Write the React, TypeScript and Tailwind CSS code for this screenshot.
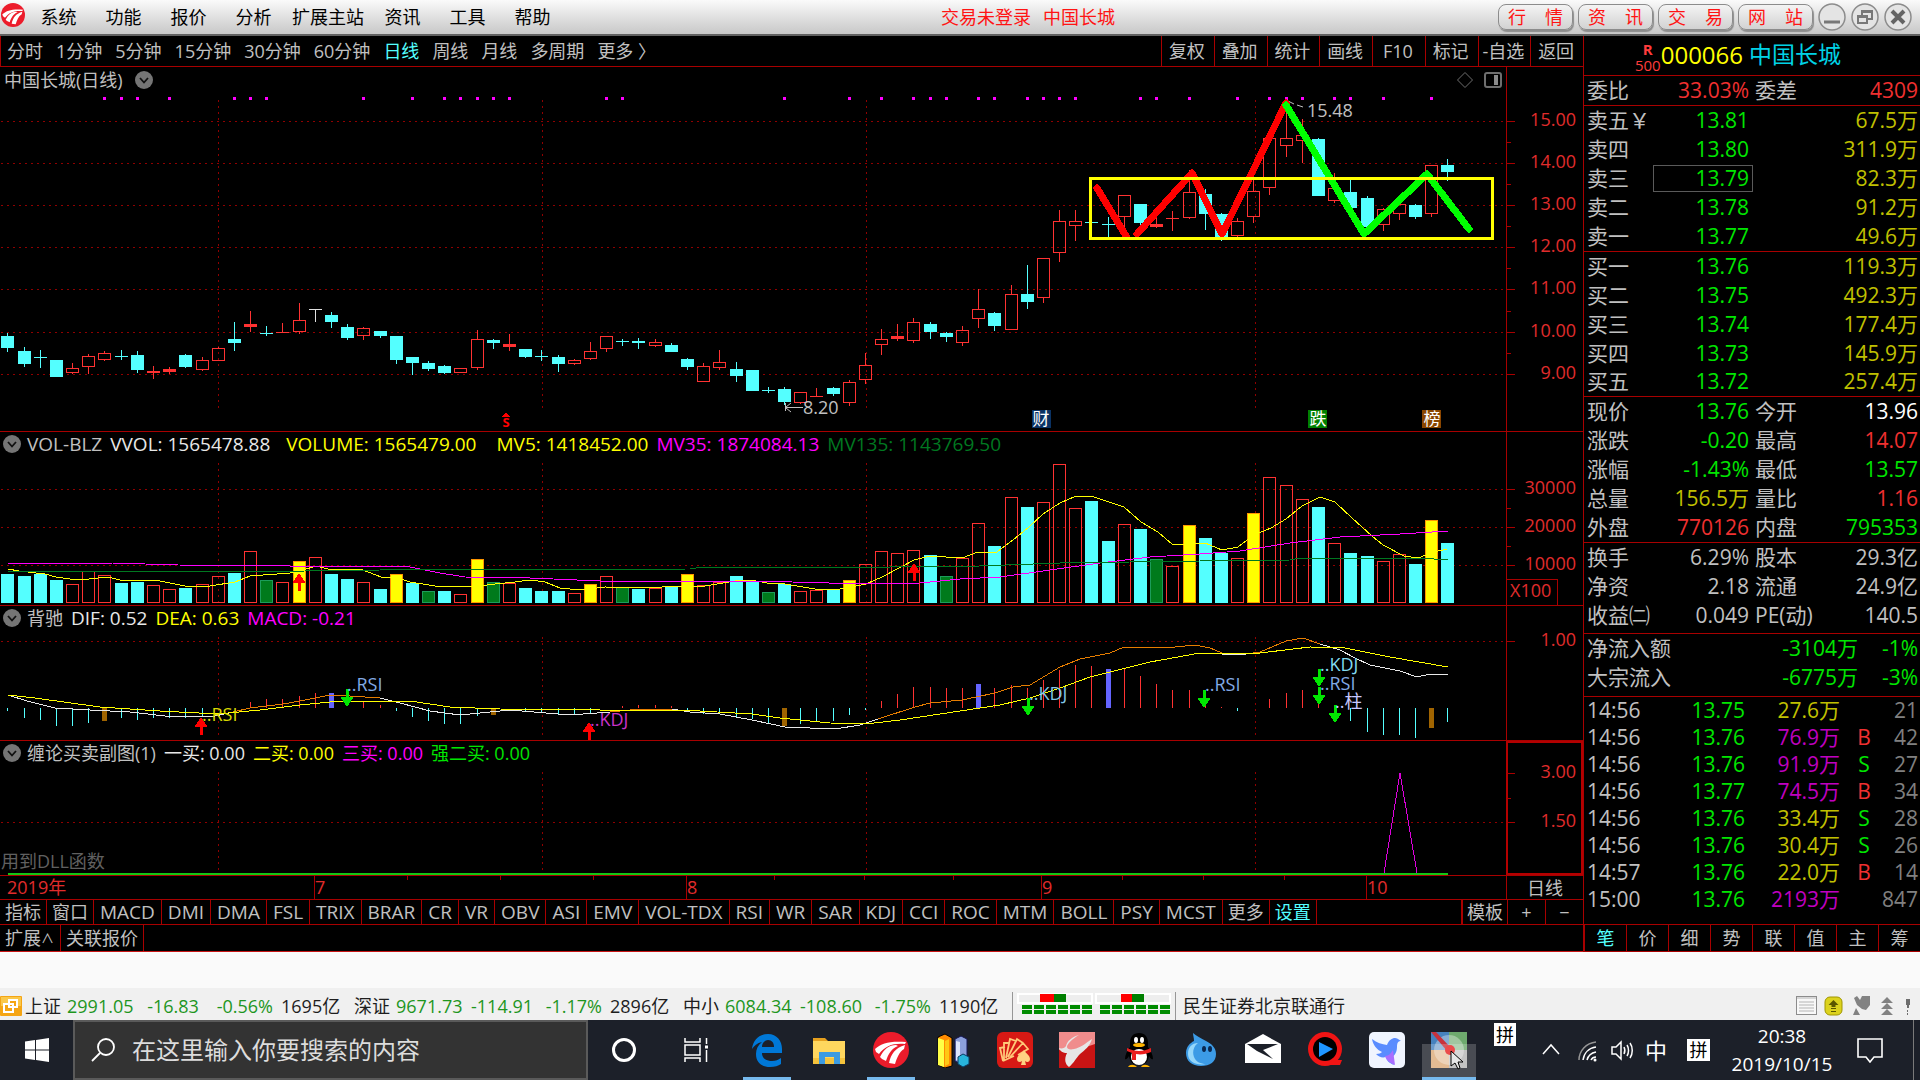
import type { ReactNode } from 'react';
import clsx from 'clsx';

type CandleKind = 'up' | 'flat' | 'down' | 'even';
type Candle = [CandleKind, number, number, number, number];
type BarKind = 'c' | 'r' | 'g' | 'y';

const STEP = 16.18;
const cx = (i: number) => Math.floor(7.9 + i * STEP);

const RED = '#ff3232';
const CYAN = '#54ffff';
const LINE = '#a80000';
const GRID = '#900000';

// kind, wick top, body top, body bottom, wick bottom
const CANDLES: Candle[] = [
  ['down', 333, 336, 348, 352], ['down', 347, 351, 364, 367], ['down', 350, 357, 358, 368],
  ['down', 360, 360, 377, 377], ['up', 363, 368, 373, 374], ['up', 354, 356, 367, 374],
  ['up', 351, 353, 360, 361], ['down', 350, 356, 357, 360], ['down', 351, 355, 370, 373],
  ['flat', 366, 371, 373, 379], ['flat', 367, 369, 372, 374], ['down', 354, 355, 367, 368],
  ['up', 357, 360, 370, 371], ['up', 347, 348, 361, 361], ['down', 322, 339, 343, 351],
  ['flat', 311, 324, 327, 332], ['down', 326, 333, 334, 336], ['flat', 323, 332, 333, 333],
  ['up', 303, 320, 332, 334], ['even', 309, 309, 310, 322], ['down', 312, 315, 322, 328],
  ['down', 324, 327, 338, 340], ['up', 327, 328, 336, 340], ['down', 331, 331, 336, 338],
  ['down', 336, 336, 360, 364], ['down', 357, 357, 363, 375], ['down', 361, 363, 369, 371],
  ['down', 365, 366, 373, 374], ['up', 368, 368, 373, 373], ['up', 330, 339, 368, 370],
  ['down', 339, 340, 343, 349], ['flat', 334, 344, 347, 351], ['down', 349, 349, 357, 358],
  ['down', 350, 356, 357, 361], ['down', 355, 357, 364, 372], ['up', 359, 360, 364, 365],
  ['up', 342, 351, 359, 360], ['up', 336, 336, 349, 352], ['down', 339, 341, 342, 346],
  ['down', 338, 341, 343, 349], ['up', 339, 342, 346, 347], ['down', 343, 345, 352, 352],
  ['down', 358, 359, 367, 370], ['up', 363, 366, 382, 382], ['up', 350, 362, 368, 370],
  ['down', 362, 369, 376, 382], ['down', 370, 370, 391, 391], ['down', 387, 390, 391, 393],
  ['down', 387, 389, 402, 405], ['up', 392, 392, 403, 404], ['flat', 388, 396, 397, 397],
  ['down', 387, 388, 394, 396], ['up', 380, 382, 403, 406], ['up', 353, 365, 380, 384],
  ['up', 329, 339, 345, 355], ['flat', 324, 336, 339, 341], ['up', 318, 322, 341, 343],
  ['down', 322, 324, 332, 339], ['down', 332, 333, 337, 342], ['up', 326, 330, 343, 346],
  ['up', 289, 309, 319, 328], ['down', 312, 313, 326, 331], ['up', 285, 294, 330, 330],
  ['down', 265, 294, 302, 309], ['up', 258, 258, 298, 303], ['up', 210, 221, 253, 262],
  ['up', 210, 221, 226, 241], ['down', 186, 222, 223, 232], ['down', 217, 224, 225, 237],
  ['up', 195, 195, 217, 237], ['down', 204, 204, 223, 226], ['flat', 215, 224, 227, 228],
  ['flat', 211, 218, 219, 231], ['up', 170, 192, 218, 219], ['down', 189, 194, 214, 230],
  ['down', 213, 214, 237, 241], ['up', 218, 221, 236, 239], ['up', 179, 191, 217, 223],
  ['up', 138, 138, 188, 195], ['up', 101, 138, 146, 157], ['up', 119, 135, 141, 163],
  ['down', 138, 139, 196, 196], ['up', 173, 188, 201, 203], ['down', 180, 192, 208, 208],
  ['down', 196, 198, 227, 233], ['up', 208, 209, 225, 231], ['up', 203, 204, 214, 220],
  ['down', 204, 205, 217, 219], ['up', 165, 165, 214, 217], ['down', 159, 165, 172, 181],
];

const SIGNAL_DOTS = [
  6, 7, 8, 10, 14, 15, 16, 22, 25, 27, 28, 29, 30, 31, 37, 38, 48, 52, 54, 56, 57, 58, 60, 61, 63,
  64, 65, 66, 70, 71, 73, 76, 78, 79, 80, 82, 83, 85, 88,
];

const VOL: [BarKind, number][] = [
  ['c', 574], ['c', 576], ['c', 574], ['c', 580], ['r', 584], ['r', 571], ['r', 575], ['c', 583],
  ['c', 582], ['r', 585], ['r', 589], ['c', 588], ['r', 584], ['r', 576], ['c', 573], ['r', 551],
  ['g', 580], ['r', 582], ['y', 561], ['r', 557], ['c', 574], ['c', 579], ['r', 582], ['c', 589],
  ['y', 574], ['c', 583], ['g', 591], ['c', 591], ['r', 594], ['y', 559], ['g', 582], ['r', 583],
  ['c', 588], ['c', 591], ['c', 591], ['r', 593], ['y', 584], ['r', 576], ['g', 587], ['c', 589],
  ['r', 588], ['c', 587], ['y', 574], ['r', 585], ['r', 582], ['c', 576], ['c', 581], ['g', 592],
  ['c', 584], ['r', 591], ['r', 590], ['c', 590], ['y', 580], ['r', 564], ['r', 551], ['r', 553],
  ['r', 550], ['c', 555], ['g', 576], ['r', 558], ['r', 523], ['c', 546], ['r', 497], ['c', 507],
  ['r', 502], ['r', 464], ['r', 508], ['c', 501], ['c', 541], ['r', 524], ['c', 529], ['g', 559],
  ['r', 566], ['y', 525], ['c', 538], ['c', 553], ['r', 558], ['y', 513], ['r', 477], ['r', 485],
  ['r', 499], ['c', 507], ['r', 543], ['c', 553], ['c', 556], ['r', 561], ['r', 554], ['c', 564],
  ['y', 520], ['c', 543],
];

const MV5 =
  '8,569 19,571 45,574 56,577 70,579 89,579 108,577 120,580 155,580 185,586 210,586 235,582 250,576 290,573 300,571 316,566 328,569 363,570 381,577 396,577 410,582 435,586 460,587 480,586 495,584 515,582 530,580 545,582 560,588 580,590 605,587 640,588 685,586 705,586 735,581 751,580 767,583 785,584 815,589 835,590 866,584 882,577 901,567 914,560 930,556 962,558 978,552 997,552 1013,540 1029,527 1043,514 1060,503 1076,496 1094,497 1124,507 1141,522 1158,532 1173,545 1205,543 1222,550 1238,547 1254,535 1271,528 1286,519 1302,506 1320,497 1335,502 1352,518 1372,536 1383,545 1404,556 1418,558 1434,552 1447,549';
const MV35 =
  '8,563 112,563 178,565 290,566 405,566 420,569 440,573 465,577 530,578 600,581 690,581 740,581 792,582 866,584 920,583 960,579 1000,577 1043,571 1100,563 1150,557 1200,554 1240,551 1290,543 1340,537 1400,534 1448,531';
const MV135 =
  '8,571 230,572 380,570 690,569 696,568 890,567 980,566 1060,563 1200,561 1290,560 1300,558 1420,558 1448,560';

// bar ends around the zero line at 708
const MACD: (number | null)[] = [
  711, 718, 720, 726, 726, 723, 721, 718, 720, 718, 718, 718, 716, null, null, 702, 699, 699, 696,
  693, 693, null, 702, 705, 711, 717, 721, 724, 724, 716, 715, null, 711, 712, 714, 714, 713, null,
  706, 705, 705, 706, 711, 714, 714, 717, 719, 723, 726, 724, 722, 721, 715, 710, 701, 694, 687, 687,
  688, 688, 684, 688, 685, 688, 680, 670, 665, 666, 669, 669, 676, 684, 690, 690, 706, 707, 711, null,
  699, 693, 690, 703, null, 721, 732, 735, 735, 738, 728, 722,
];
const MACD_WIDE: Record<number, string> = {
  6: '#a06400', 30: '#a06400', 48: '#a06400', 88: '#a06400', 20: '#6464ff', 60: '#6464ff', 68: '#6464ff',
};

const DEA =
  '8,695 35,698 100,707 160,711 218,714 260,710 300,705 340,701 410,701 450,707 500,709 700,711 752,714 780,718 830,723 866,724 900,720 1000,705 1030,698 1060,688 1090,677 1150,662 1200,653 1260,653 1310,647 1345,648 1390,657 1448,667';
const DIF_BELOW = [
  '8,695 27,701 55,708 90,710 130,712 165,716 215,716 233,712',
  '380,698 400,703 430,711 460,715 480,713 510,710 570,715 610,712',
  '672,709 690,712 720,714 752,720 785,727 835,729 860,725 878,719',
  '1222,654 1246,654',
  '1320,644 1340,650 1355,658 1370,665 1400,671 1417,677 1430,674 1448,674',
];
const DIF_ABOVE = [
  '233,712 250,708 283,704 300,701 330,695 350,696 380,698',
  '610,712 640,709 672,709',
  '878,719 915,707 930,703 962,700 995,693 1013,687 1030,685 1060,667 1080,659 1110,653 1124,647 1175,647 1195,645 1210,648 1222,653',
  '1246,654 1260,652 1286,641 1303,638 1320,644',
];

const MENUS = ['系统', '功能', '报价', '分析', '扩展主站', '资讯', '工具', '帮助'];
const PERIODS = ['分时', '1分钟', '5分钟', '15分钟', '30分钟', '60分钟', '日线', '周线', '月线', '多周期', '更多 〉'];
const TOOLS = ['复权', '叠加', '统计', '画线', 'F10', '标记', '-自选', '返回'];
const INDICATORS = [
  '指标', '窗口', 'MACD', 'DMI', 'DMA', 'FSL', 'TRIX', 'BRAR', 'CR', 'VR', 'OBV', 'ASI', 'EMV',
  'VOL-TDX', 'RSI', 'WR', 'SAR', 'KDJ', 'CCI', 'ROC', 'MTM', 'BOLL', 'PSY', 'MCST', '更多', '设置',
];

const ASKS = [
  ['卖五￥', '13.81', '67.5万'], ['卖四', '13.80', '311.9万'], ['卖三', '13.79', '82.3万'],
  ['卖二', '13.78', '91.2万'], ['卖一', '13.77', '49.6万'],
];
const BIDS = [
  ['买一', '13.76', '119.3万'], ['买二', '13.75', '492.3万'], ['买三', '13.74', '177.4万'],
  ['买四', '13.73', '145.9万'], ['买五', '13.72', '257.4万'],
];

const UP = 'text-[#f03030]';
const DN = 'text-[#00e600]';
const AMT = 'text-[#c0c000]';
const BIG = 'text-[#c000c0]';
const DIM = 'text-[#c0c0c0]';

const QUOTE = [
  ['现价', '13.76', DN, '今开', '13.96', 'text-white'],
  ['涨跌', '-0.20', DN, '最高', '14.07', UP],
  ['涨幅', '-1.43%', DN, '最低', '13.57', DN],
  ['总量', '156.5万', AMT, '量比', '1.16', UP],
  ['外盘', '770126', UP, '内盘', '795353', DN],
];
const FUNDAMENTALS = [
  ['换手', '6.29%', DIM, '股本', '29.3亿', DIM],
  ['净资', '2.18', DIM, '流通', '24.9亿', DIM],
  ['收益㈡', '0.049', DIM, 'PE(动)', '140.5', DIM],
];
const TICKS = [
  ['14:56', '13.75', '27.6万', '', '21', AMT], ['14:56', '13.76', '76.9万', 'B', '42', BIG],
  ['14:56', '13.76', '91.9万', 'S', '27', BIG], ['14:56', '13.77', '74.5万', 'B', '34', BIG],
  ['14:56', '13.76', '33.4万', 'S', '28', AMT], ['14:56', '13.76', '30.4万', 'S', '26', AMT],
  ['14:57', '13.76', '22.0万', 'B', '14', AMT], ['15:00', '13.76', '2193万', '', '847', BIG],
];
const SIDE_TABS = ['笔', '价', '细', '势', '联', '值', '主', '筹'];
const INDEXES = [
  ['上证', '2991.05', '-16.83', '-0.56%', '1695亿'],
  ['深证', '9671.73', '-114.91', '-1.17%', '2896亿'],
  ['中小', '6084.34', '-108.60', '-1.75%', '1190亿'],
];

function BrandMark({ className }: { className?: string }) {
  return (
    <svg viewBox="0 0 36 36" className={className} aria-hidden="true">
      <circle cx="18" cy="18" r="18" fill="#ec1c2b" />
      <path d="M2 17C9 11 16 9 33 10L32 12C20 11 12 14 6 22L3 20Z" fill="#fff" />
      <path d="M7 25C11 17 16 13 23 13L25 14C19 16 15 22 13 29L9 27Z" fill="#fff" />
      <path d="M16 31C18 22 22 16 32 13L31 17C26 20 24 26 22 32Z" fill="#fff" />
    </svg>
  );
}

function Grid({ rows, top, bottom }: { rows: number[]; top: number; bottom: number }) {
  return (
    <g stroke={GRID} strokeWidth="2" strokeDasharray="2 4">
      {rows.map((y) => (
        <line key={y} x1="1" x2="1506" y1={y} y2={y} strokeWidth="1" />
      ))}
      {[218, 542, 866, 1255].map((x) => (
        <line key={x} x1={x} x2={x} y1={top} y2={bottom} strokeWidth="1" />
      ))}
    </g>
  );
}

function Arrow({ x, y, down }: { x: number; y: number; down?: boolean }) {
  return down ? (
    <path d={`M${x - 1.5} ${y}h3v8h5l-6.500 10l-6.500 -10h5z`} fill="#00e600" />
  ) : (
    <path d={`M${x - 1.5} ${y + 18}h3v-8h5l-6.500 -10l-6.500 10h5z`} fill="#ff0000" />
  );
}

interface PanelProps {
  header: ReactNode;
  headerClass?: string;
  top: number;
  height: string;
  size: number;
  children: ReactNode;
  ticks: [number, string][];
  minor?: number[];
  active?: boolean;
  unit?: string;
}

function Panel({ header, headerClass, top, height, size, children, ticks, minor = [], active, unit }: PanelProps) {
  return (
    <section className="flex border-b border-[#a80000]">
      <div className="min-w-0 flex-1">
        <div
          className={clsx('flex h-[26px] items-center gap-2 whitespace-nowrap pl-[3px] leading-none', headerClass)}
        >
          {header}
        </div>
        <svg
          viewBox={`0 ${top + 26} 1506 ${size - 26}`}
          preserveAspectRatio="none"
          className={clsx('block w-full', height)}
          shapeRendering="crispEdges"
          fontSize="18"
        >
          {children}
        </svg>
      </div>
      <svg viewBox={`0 ${top} 77 ${size}`} className="w-[77px] shrink-0" shapeRendering="crispEdges" fontSize="18">
        {active ? (
          <rect x="1" y={top + 1} width="75" height={size - 2} fill="none" stroke="#b40000" strokeWidth="2" />
        ) : (
          <rect y={top} width="1" height={size} fill={LINE} />
        )}
        {ticks.map(([y, label]) => (
          <g key={label}>
            <rect x="1" y={y} width="8" height="1" fill={LINE} />
            <text x="70" y={y + 5} textAnchor="end" fill="#e02c2c">
              {label}
            </text>
          </g>
        ))}
        {minor.map((y) => (
          <rect key={y} x="1" y={y} width="4" height="1" fill={LINE} />
        ))}
        {unit ? (
          <>
            <path d="M0 579.500H51.500V605" fill="none" stroke={LINE} />
            <text x="4" y="597" fill="#e02c2c">
              {unit}
            </text>
          </>
        ) : null}
      </svg>
    </section>
  );
}

function Collapse({ label }: { label: string }) {
  return (
    <button type="button" aria-label={label} className="shrink-0">
      <svg viewBox="0 0 18 18" className="h-[18px] w-[18px]">
        <circle cx="9" cy="9" r="9" fill="#757575" />
        <path d="M5 7l4 4.500L13 7" fill="none" stroke="#111" strokeWidth="1.800" />
      </svg>
    </button>
  );
}

function CandlePanel() {
  return (
    <Panel
      top={67}
      size={364}
      height="h-[338px]"
      ticks={[
        [121, '15.00'], [163, '14.00'], [205, '13.00'], [247, '12.00'], [289, '11.00'], [332, '10.00'], [374, '9.00'],
      ]}
      minor={[142, 184, 226, 268, 311, 353]}
      header={
        <>
          <span className="mr-1 pl-px text-[#c0c0c0]">中国长城(日线)</span>
          <Collapse label="展开" />
          <svg viewBox="0 0 46 18" className="ml-auto mr-1 h-[18px] w-[46px]" fill="none" stroke="#6e6e6e">
            <path d="M9 1.500L16.500 9L9 16.500L1.500 9Z" />
            <rect x="29" y="2" width="16" height="14" rx="2" strokeWidth="2" />
            <rect x="38" y="4" width="4" height="10" fill="#8a8a8a" stroke="none" />
          </svg>
        </>
      }
    >
      <Grid rows={[121, 163, 205, 247, 289, 332, 374]} top={100} bottom={408} />
      {SIGNAL_DOTS.map((i) => (
        <rect key={i} x={cx(i) - 1} y="97" width="3" height="3" fill="#ff00ff" />
      ))}
      {CANDLES.map(([kind, high, top, bottom, low], i) => {
        const x = cx(i);
        const color = kind === 'down' ? CYAN : kind === 'even' ? '#e0e0e0' : RED;
        return (
          <g key={i} fill={color}>
            {kind === 'up' ? (
              <>
                <rect x={x} y={high} width="1" height={top - high} />
                <rect x={x} y={bottom} width="1" height={low - bottom} />
                <rect x={x - 5.5} y={top + 0.5} width="12" height={bottom - top - 1} fill="none" stroke={color} />
              </>
            ) : (
              <>
                <rect x={x} y={high} width="1" height={low - high} />
                <rect x={x - 6} y={top} width="13" height={Math.max(bottom - top, 1)} />
              </>
            )}
          </g>
        );
      })}
      <g fill="#c0c0c0" shapeRendering="auto">
        <path d="M786 407.500H803M785.500 403V411M786 407l5-4M786 408l5 4" fill="none" stroke="#c0c0c0" />
        <text x="803" y="414">8.20</text>
        <path d="M1288 101l6 3M1297 105l6 2" stroke="#c0c0c0" />
        <text x="1307" y="117">15.48</text>
      </g>
      <g fill="none" strokeLinecap="round" strokeLinejoin="round" strokeWidth="7">
        <path d="M1097 188L1126 236M1137 234L1192 173L1222 234L1286 103" stroke="#ff0000" />
        <path d="M1286 105L1364 234L1427 174L1469 229" stroke="#00ff00" />
        <rect x="1090.500" y="178.500" width="402" height="60" stroke="#ffff00" strokeWidth="3" strokeLinejoin="miter" />
      </g>
      <g textAnchor="middle" fill="#fff" fontSize="17">
        <path d="M506 412l4 5h-8z" fill="#ff0000" />
        <text x="506" y="427" fill="#ff0000" fontSize="13" fontWeight="700">S</text>
        <rect x="1032" y="410" width="19" height="18" fill="#0a3264" />
        <text x="1041" y="425">财</text>
        <rect x="1308" y="410" width="19" height="18" fill="#008000" />
        <text x="1318" y="425">跌</text>
        <rect x="1422" y="410" width="19" height="18" fill="#8a4600" />
        <text x="1432" y="425">榜</text>
      </g>
    </Panel>
  );
}

function VolumePanel() {
  return (
    <Panel
      top={432}
      size={173}
      height="h-[147px]"
      headerClass="pb-0.5 text-[19px]"
      ticks={[[489, '30000'], [527, '20000'], [565, '10000']]}
      minor={[508, 546]}
      unit="X100"
      header={
        <>
          <Collapse label="VOL-BLZ" />
          <span className="-ml-0.5 text-[#c0c0c0]">VOL-BLZ</span>
          <span className="text-[#e8e8e8]">VVOL: 1565478.88</span>
          <span className="ml-2 text-[#ffff00]">VOLUME: 1565479.00</span>
          <span className="ml-3 text-[#ffff00]">MV5: 1418452.00</span>
          <span className="text-[#ff00ff]">MV35: 1874084.13</span>
          <span className="text-[#007820]">MV135: 1143769.50</span>
        </>
      }
    >
      <Grid rows={[489, 527, 565]} top={463} bottom={603} />
      {VOL.map(([kind, y], i) => {
        const x = cx(i) - 6;
        const h = 603 - y;
        if (kind === 'r') {
          return <rect key={i} x={x + 0.5} y={y + 0.5} width="12" height={h - 1} fill="none" stroke={RED} />;
        }
        if (kind === 'y') {
          return <rect key={i} x={x + 0.5} y={y + 0.5} width="12" height={h - 1} fill="#ffff00" stroke="#ff9600" />;
        }
        if (kind === 'g') {
          return <rect key={i} x={x + 0.5} y={y + 0.5} width="12" height={h - 1} fill="#007a1c" stroke="#1c9c5a" />;
        }
        return <rect key={i} x={x} y={y} width="13" height={h} fill={CYAN} />;
      })}
      <g fill="none">
        <polyline points={MV5} stroke="#ffff00" />
        <polyline points={MV35} stroke="#ff00ff" />
        <polyline points={MV135} stroke="#007820" />
      </g>
      <Arrow x={299} y={573} />
      <Arrow x={914} y={563} />
    </Panel>
  );
}

function MacdPanel() {
  return (
    <Panel
      top={606}
      size={134}
      height="h-[108px]"
      headerClass="pb-0.5"
      ticks={[[641, '1.00']]}
      header={
        <>
          <Collapse label="背驰" />
          <span className="-ml-0.5 text-[#c0c0c0]">背驰</span>
          <span className="text-[19px] text-[#e8e8e8]">DIF: 0.52</span>
          <span className="text-[19px] text-[#ffff00]">DEA: 0.63</span>
          <span className="text-[19px] text-[#ff00ff]">MACD: -0.21</span>
        </>
      }
    >
      <Grid rows={[641]} top={637} bottom={736} />
      {MACD.map((end, i) => {
        if (end === null) return null;
        const wide = MACD_WIDE[i];
        return (
          <rect
            key={i}
            x={wide ? cx(i) - 2 : cx(i)}
            y={Math.min(end, 708)}
            width={wide ? 5 : 1}
            height={Math.max(Math.abs(end - 708), 1)}
            fill={wide ?? (end > 708 ? CYAN : RED)}
          />
        );
      })}
      <g fill="none" strokeWidth="1">
        {DIF_BELOW.map((p) => (
          <polyline key={p} points={p} stroke="#e8e8e8" />
        ))}
        {DIF_ABOVE.map((p) => (
          <polyline key={p} points={p} stroke="#e67d00" />
        ))}
        <polyline points={DEA} stroke="#ffff00" />
      </g>
      <Arrow x={201} y={717} />
      <Arrow x={589} y={722} />
      <Arrow x={347} y={689} down />
      <Arrow x={1028} y={698} down />
      <Arrow x={1204} y={690} down />
      <Arrow x={1319} y={669} down />
      <Arrow x={1319} y={687} down />
      <Arrow x={1335} y={705} down />
      <text x="202" y="721" fill="#d8d800">..RSI</text>
      <text x="590" y="726" fill="#c832c8">..KDJ</text>
      <text x="347" y="691" fill="#82aae6">..RSI</text>
      <text x="1029" y="700" fill="#82c8e6">..KDJ</text>
      <text x="1205" y="691" fill="#82aae6">..RSI</text>
      <text x="1320" y="671" fill="#82dcf0">..KDJ</text>
      <text x="1320" y="690" fill="#82aae6">..RSI</text>
      <text x="1335" y="708" fill="#c8c8ff">..柱</text>
    </Panel>
  );
}

function ChanPanel() {
  return (
    <Panel
      top={741}
      size={134}
      height="h-[108px]"
      headerClass="pb-0.5"
      ticks={[[773, '3.00'], [822, '1.50']]}
      minor={[798]}
      active
      header={
        <>
          <Collapse label="缠论买卖副图" />
          <span className="-ml-0.5 text-[#c0c0c0]">缠论买卖副图(1)</span>
          <span className="text-[#e8e8e8]">一买: 0.00</span>
          <span className="text-[#ffff00]">二买: 0.00</span>
          <span className="text-[#ff00ff]">三买: 0.00</span>
          <span className="text-[#00e600]">强二买: 0.00</span>
        </>
      }
    >
      <Grid rows={[822]} top={772} bottom={871} />
      <path d="M1384 873L1400 773L1417 873" fill="none" stroke="#dc00dc" />
      <line x1="8" x2="1448" y1="874" y2="874" stroke="#14c814" strokeWidth="2" />
      <text x="1" y="868" fill="#606060">用到DLL函数</text>
    </Panel>
  );
}

function DateAxis() {
  return (
    <div className="flex h-6 border-b border-[#a80000] leading-none text-[#e02c2c]">
      <svg viewBox="0 0 1506 23" preserveAspectRatio="none" className="h-[23px] min-w-0 flex-1" fontSize="18" shapeRendering="crispEdges">
        <path
          d="M314.500 0V23M686.500 0V23M1041.500 0V23M1366.500 0V23M407.500 0V4M500.500 0V4M593.500 0V4M774.500 0V4M864.500 0V4M953.500 0V4M1122.500 0V4M1203.500 0V4M1284.500 0V4"
          stroke={LINE}
        />
        <g fill="#e02c2c">
          <text x="7" y="18">2019年</text>
          <text x="315" y="18">7</text>
          <text x="687" y="18">8</text>
          <text x="1042" y="18">9</text>
          <text x="1367" y="18">10</text>
        </g>
      </svg>
      <div className="flex w-[77px] items-center justify-center border-l border-[#a80000] text-[#c0c0c0]">日线</div>
    </div>
  );
}

function IndicatorTabs() {
  return (
    <>
      <div className="flex h-[25px] border-b border-[#a80000] leading-none">
        {INDICATORS.map((name) => (
          <button
            key={name}
            type="button"
            className={clsx(
              'flex items-center whitespace-nowrap border-r border-[#a80000]',
              /[A-Z]/.test(name) ? 'px-1.5 text-[19px]' : 'px-[5px]',
              name === '设置' ? 'text-[#54ffff]' : 'text-[#c0c0c0]',
            )}
          >
            {name}
          </button>
        ))}
        <div className="ml-auto flex text-[#c0c0c0]">
          <button type="button" className="border-l-2 border-[#a80000] px-1">模板</button>
          <button type="button" aria-label="放大" className="w-[38px] border-l border-[#a80000]">+</button>
          <button type="button" aria-label="缩小" className="w-[38px] border-l border-[#a80000]">−</button>
        </div>
      </div>
      <div className="flex h-[27px] border-b border-[#c81414] leading-none text-[#c0c0c0]">
        <button type="button" className="flex w-[61px] items-center border-r border-[#a80000] pl-[5px]">
          扩展<span className="text-[13px]">∧</span>
        </button>
        <button type="button" className="border-r border-[#a80000] px-[5px]">关联报价</button>
      </div>
    </>
  );
}

function BookTable({ rows, label }: { rows: string[][]; label: string }) {
  return (
    <table aria-label={label} className="w-full table-fixed border-b border-[#a80000]">
      <tbody>
        {rows.map(([side, price, amount]) => (
          <tr key={side} className="h-[29px]">
            <th scope="row" className="w-[69px] whitespace-nowrap p-0 pl-[3px] text-left font-normal text-[#c0c0c0]">
              {side}
            </th>
            <td className="w-[100px] p-0">
              <div
                className={clsx(
                  'flex h-[27px] items-center justify-end border pr-[3px] text-[#00e600]',
                  side === '卖三' ? 'border-[#5a5a5a]' : 'border-transparent',
                )}
              >
                {price}
              </div>
            </td>
            <td className="p-0 pr-0.5 text-right text-[#c0c000]">{amount}</td>
          </tr>
        ))}
      </tbody>
    </table>
  );
}

function PairRows({ rows, className }: { rows: string[][]; className?: string }) {
  return (
    <dl className={clsx('border-b border-[#a80000]', className)}>
      {rows.map(([a, av, ac, b, bv, bc]) => (
        <div key={a} className="flex h-[29px] items-center whitespace-nowrap pl-[3px] pr-0.5">
          <dt className="w-[66px] text-[#c0c0c0]">{a}</dt>
          <dd className={clsx('w-24 text-right', ac)}>{av}</dd>
          <dt className="ml-1.5 text-[#c0c0c0]">{b}</dt>
          <dd className={clsx('ml-auto text-right', bc)}>{bv}</dd>
        </div>
      ))}
    </dl>
  );
}

function QuoteSidebar() {
  return (
    <aside className="flex w-[337px] shrink-0 flex-col border-l border-[#a80000] text-[21px] leading-none">
      <div className="flex h-10 items-center justify-center border-b border-[#a80000] pb-0.5 pr-7">
        <span className="mt-1 flex flex-col items-center text-[15px] leading-4 text-[#ff3c3c]">
          <b>R</b>
          <span>500</span>
        </span>
        <span className="text-2xl text-[#ffff00]">000066</span>
        <span className="ml-1.5 text-[23px] text-[#00d2e6]">中国长城</span>
      </div>
      <PairRows rows={[['委比', '33.03%', UP, '委差', '4309', UP]]} />
      <BookTable rows={ASKS} label="卖盘" />
      <BookTable rows={BIDS} label="买盘" />
      <PairRows rows={QUOTE} />
      <PairRows rows={FUNDAMENTALS} className="pb-[3px]" />
      <dl className="border-b border-[#a80000] pb-1">
        {[['净流入额', '-3104万', '-1%'], ['大宗流入', '-6775万', '-3%']].map(([name, amount, pct]) => (
          <div key={name} className="flex h-[29px] items-center pl-[3px] pr-0.5 text-[#00e600]">
            <dt className="text-[#c0c0c0]">{name}</dt>
            <dd className="ml-auto">{amount}</dd>
            <dd className="w-[60px] text-right">{pct}</dd>
          </div>
        ))}
      </dl>
      <div className="flex-1">
        <table aria-label="分时成交" className="w-full table-fixed">
          <tbody>
            {TICKS.map(([time, price, amount, side, count, tone], i) => (
              <tr key={i} className="h-[27px] text-right">
                <td className="w-[69px] p-0 pl-[3px] text-left text-[#c0c0c0]">{time}</td>
                <td className="w-[92px] p-0 text-[#00e600]">{price}</td>
                <td className={clsx('w-[95px] p-0', tone)}>{amount}</td>
                <td className={clsx('w-[48px] p-0 text-center', side === 'B' ? UP : DN)}>{side}</td>
                <td className="whitespace-nowrap p-0 pr-0.5 text-[#808080]">
                  <div className="flex justify-end">{count}</div>
                </td>
              </tr>
            ))}
          </tbody>
        </table>
      </div>
      <div className="grid h-7 grid-cols-8 border-y border-[#a80000] text-lg leading-none">
        {SIDE_TABS.map((tab, i) => (
          <button
            key={tab}
            type="button"
            className={clsx('border-l border-[#a80000]', i === 0 ? 'text-[#54ffff]' : 'text-[#c0c0c0]')}
          >
            {tab}
          </button>
        ))}
      </div>
    </aside>
  );
}

function TitleBar() {
  return (
    <header className="flex h-9 items-center border-b-2 border-[#606060] bg-linear-to-b from-[#fafafa] to-[#c8c8c8] leading-none text-black">
      <BrandMark className="mb-1 h-6 w-[26px]" />
      <nav className="flex">
        {MENUS.map((m) => (
          <button key={m} type="button" className={m.length > 2 ? 'w-[84px]' : 'w-[65px]'}>
            {m}
          </button>
        ))}
      </nav>
      <p className="flex flex-1 gap-3 pl-[376px] text-[#ff1414]">
        <span>交易未登录</span>
        <span>中国长城</span>
      </p>
      <div className="flex items-center gap-[5px] pr-2">
        {['行 情', '资 讯', '交 易', '网 站'].map((b) => {
          const [first, second] = b.split(' ');
          return (
            <button
              key={b}
              type="button"
              className="flex h-[26px] w-[75px] items-center justify-between rounded-lg border border-[#8c8c8c] bg-linear-to-b from-[#f4f4f4] to-[#d2d2d2] px-[9px] text-[#ff1414] shadow-[1px_2px_1px_#8c8c8c]"
            >
              <span>{first}</span>
              <span>{second}</span>
            </button>
          );
        })}
        {['最小化', '还原', '关闭'].map((name, i) => (
          <button key={name} type="button" aria-label={name}>
            <svg viewBox="0 0 28 28" className="h-7 w-7" fill="none" stroke="#787878">
              <circle cx="14" cy="14" r="13" fill="#e4e4e4" stroke="#8c8c8c" strokeWidth="1.500" />
              {i === 0 ? <path d="M6 19H22" strokeWidth="3" /> : null}
              {i === 1 ? (
                <path d="M11 12V8H21V16H17M11 9H21M7 13H16V20H7ZM7 14H16" strokeWidth="2" />
              ) : null}
              {i === 2 ? <path d="M8 8L20 20M20 8L8 20" stroke="#646464" strokeWidth="4" /> : null}
            </svg>
          </button>
        ))}
      </div>
    </header>
  );
}

function PeriodBar() {
  return (
    <div className="flex h-[31px] border-b border-l border-[#a80000] leading-none text-[#c0c0c0]">
      <nav className="flex flex-1 items-center gap-[13px] pl-1.5">
        {PERIODS.map((p) => (
          <button key={p} type="button" className={clsx('whitespace-nowrap', p === '日线' && 'text-[#54ffff]')}>
            {p}
          </button>
        ))}
      </nav>
      <div className="grid w-[422px] grid-cols-8">
        {TOOLS.map((t) => (
          <button key={t} type="button" className="whitespace-nowrap border-l border-[#a80000] pr-0.5">
            {t}
          </button>
        ))}
      </div>
    </div>
  );
}

function BreadthMeter({ red, green }: { red: number; green: number }) {
  return (
    <svg viewBox="0 0 76 22" className="h-[22px] w-[76px]" shapeRendering="crispEdges" aria-hidden="true">
      <rect x="1" y="1" width="74" height="9" fill="#eee" stroke="#fff" strokeWidth="2" />
      <rect x={red} y="1" width={green - red} height="8" fill="#ff0000" />
      <rect x={green} y="1" width="12" height="8" fill="#008000" />
      {[5, 17, 29, 41, 53, 65].map((x) => (
        <g key={x} fill="#008c00">
          <rect x={x} y="12" width="10" height="4" />
          <rect x={x} y="17" width="10" height="4" />
        </g>
      ))}
    </svg>
  );
}

function StatusBar() {
  return (
    <footer className="flex h-8 items-center bg-[#f0f0f0] pt-1 leading-none text-[#1e1e1e]">
      <svg viewBox="0 0 22 20" className="mr-[3px] h-5 w-[22px]" aria-hidden="true">
        <rect width="22" height="20" rx="1" fill="#f5a514" />
        <rect x="1" y="1" width="20" height="9" fill="#fac84b" />
        <path d="M9 4h8v7h-8zM4 8h9v8H4z" fill="#f5a514" stroke="#fff" strokeWidth="2" />
      </svg>
      {INDEXES.map(([name, price, diff, pct, amount]) => (
        <div key={name} className="flex w-[329px] text-[#1e961e]">
          <span className="w-[42px] text-[#1e1e1e]">{name}</span>
          <span className="w-[74px]">{price}</span>
          <span className="w-16 text-center">{diff}</span>
          <span className="w-[68px] text-right">{pct}</span>
          <span className="ml-2 text-[#1e1e1e]">{amount}</span>
        </div>
      ))}
      <div className="flex h-full items-center gap-0.5 border-x border-[#969696] px-1 pb-1">
        <BreadthMeter red={23} green={37} />
        <BreadthMeter red={26} green={37} />
      </div>
      <span className="ml-[7px]">民生证券北京联通行</span>
      <svg viewBox="0 0 120 24" className="ml-auto mr-1 h-6 w-[120px]" aria-hidden="true">
        <rect x="0.500" y="2.500" width="20" height="18" fill="#f8f8f8" stroke="#8c8c8c" />
        <path d="M1 4h19M3 8h15M3 11h15M3 14h15M3 17h15" stroke="#b4b4b4" />
        <rect x="29" y="3" width="17" height="18" rx="5" fill="#dcd21e" stroke="#a09600" />
        <path d="M37.500 6l5 5h-3v2h-4v-2h-3zM35 14h5v1h-5zM35 17h5v1h-5z" fill="#5a5500" />
        <path d="M58 4l3-2l3 4l2-4h8v9l-4 5l-4-1l-5-4zM57 21l3-7l4 7z" fill="#828282" />
        <path d="M91 3l6 6h-12zM91 9l6 6h-12zM91 15l6 6h-12z" fill="#828282" />
        <path d="M110 5h4v6h-1v3h-2v-3h-1zM111 16h1v2h-1zM111 19h1v2h-1z" fill="#6e6e6e" />
      </svg>
    </footer>
  );
}

const APPS: { name: string; running?: boolean; icon: ReactNode }[] = [
  {
    name: 'Edge',
    running: true,
    icon: (
      <path
        d="M3 17C4 8 10 2 19 2C28 2 33 9 33 17V21H13C13 27 18 29 23 29C27 29 29 28 32 26V32C29 34 26 35 21 35C12 35 7 30 7 22C7 17 9 13 13 10C8 11 5 14 3 17ZM13 15H25C25 11 23 8 19 8C16 8 13 11 13 15Z"
        fill="#0078d7"
      />
    ),
  },
  {
    name: '文件资源管理器',
    icon: (
      <>
        <path d="M2 6h12l3 3v3H2z" fill="#e6a01e" />
        <rect x="2" y="9" width="32" height="23" fill="#ffd75e" />
        <path d="M2 26h32v6H2z" fill="#f5c33c" />
        <path d="M8 32V20h21v12h-6v-7h-9v7z" fill="#3c9be1" />
      </>
    ),
  },
  {
    name: '通达信',
    running: true,
    icon: (
      <>
        <circle cx="18" cy="18" r="18" fill="#ec1c2b" />
        <path d="M2 17C9 11 16 9 33 10L32 12C20 11 12 14 6 22L3 20Z" fill="#fff" />
        <path d="M7 25C11 17 16 13 23 13L25 14C19 16 15 22 13 29L9 27Z" fill="#fff" />
        <path d="M16 31C18 22 22 16 32 13L31 17C26 20 24 26 22 32Z" fill="#fff" />
      </>
    ),
  },
  {
    name: '行情',
    icon: (
      <>
        <path d="M3 5l7-3l7 4v28l-7 2l-7-3z" fill="#ff8c00" stroke="#000" />
        <path d="M3 6l6 2v27l-6-2z" fill="#ffff46" />
        <path d="M10 9l4-2v25l-4 2z" fill="#ffc814" />
        <path d="M20 7l6-3l6 3v22l-6 3l-6-3z" fill="#8ca0dc" stroke="#141450" />
        <path d="M21 9l4 1v19l-4-1z" fill="#dce6ff" />
        <path d="M23 25l5-3l6 3v7l-6 3l-5-3z" fill="#28b4dc" stroke="#0a3c64" />
      </>
    ),
  },
  {
    name: '纸牌',
    icon: (
      <>
        <rect width="36" height="36" rx="6" fill="#d71914" />
        <path d="M6 29L3 16L8 15M7 28L7 11L12 11M9 26L13 7L19 9M11 25L20 7L26 11M13 25L26 11L31 17L21 23M6 29L17 24" fill="none" stroke="#ffc878" strokeWidth="1.800" />
        <path d="M27 18c2 4 6 5 6 9c0 3-3 4-5 2l1 4h-5l1-4c-2 2-5 1-5-2c0-4 5-5 7-9z" fill="#ffd282" />
      </>
    ),
  },
  {
    name: '交易',
    icon: (
      <>
        <rect width="36" height="36" fill="#c81414" />
        <path d="M0 0H36V12C24 16 12 20 0 18Z" fill="#f08c8c" />
        <path d="M20 3C13 7 8 12 8 15C8 17 11 18 15 17C21 16 27 11 33 7C31 14 26 18 21 22C17 26 15 31 10 35C6 32 5 27 8 21C4 21 1 19 0 16C3 17 6 16 7 14C8 9 13 5 20 3Z" fill="#e6e6e6" />
      </>
    ),
  },
  {
    name: 'QQ',
    icon: (
      <>
        <path d="M18 1c6 0 9 4 9 10v4c3 4 5 8 5 12c-1 1-3-1-4-3c-1 6-4 9-10 9s-9-3-10-9c-1 2-3 4-4 3c0-4 2-8 5-12v-4c0-6 3-10 9-10z" fill="#000" />
        <ellipse cx="18" cy="25" rx="8" ry="8" fill="#fff" />
        <ellipse cx="15" cy="8" rx="2" ry="3" fill="#fff" />
        <ellipse cx="21" cy="8" rx="2" ry="3" fill="#fff" />
        <ellipse cx="18" cy="13" rx="6" ry="2" fill="#ffb400" />
        <path d="M6 16c8 4 16 4 24 0v4c-5 2-10 3-15 2v6h-4v-7l-5-2z" fill="#eb1e1e" />
        <path d="M7 35c2-3 6-3 9 0zM20 35c2-3 6-3 9 0z" fill="#ffb400" />
      </>
    ),
  },
  {
    name: '水滴',
    icon: (
      <>
        <path d="M10 1c3 3 8 5 13 8c6 3 10 7 10 13c0 8-6 12-15 12S3 29 3 21c0-6 4-10 8-12c0-3-1-6-1-8z" fill="#3c9be6" />
        <path d="M5 22c0-7 4-11 10-11c-4 3-6 8-4 14c2 5 7 7 12 7c-9 2-18-2-18-10z" fill="#96d7fa" />
        <ellipse cx="21" cy="17" rx="2" ry="3" fill="#0a2850" />
        <ellipse cx="27" cy="17" rx="2" ry="3" fill="#0a2850" />
      </>
    ),
  },
  {
    name: '邮件',
    icon: (
      <>
        <path d="M0 12L18 2L36 12V31H0Z" fill="#fff" />
        <path d="M2 12H33L18 18L28 27L12 19Z" fill="#1c2029" />
      </>
    ),
  },
  {
    name: '播放器',
    icon: (
      <>
        <circle cx="18" cy="17" r="17" fill="#f01414" />
        <path d="M20 28h15l-2 5H20z" fill="#f01414" />
        <circle cx="18" cy="17" r="12" fill="#000" />
        <path d="M12 10l14 7l-14 8z" fill="#1e96ff" />
      </>
    ),
  },
  {
    name: '迅雷',
    icon: (
      <>
        <rect width="36" height="36" rx="5" fill="#f0f5ff" />
        <path d="M3 7c5 4 10 5 15 6c2-5 5-7 8-7c2 0 3 1 6 3c-3 0-4 2-4 6c0 6-3 9-6 11l3 7c-5-2-8-5-8-8c-4 1-7 0-10-3c3 0 5-1 6-2c-5-2-9-7-10-13z" fill="#5a8cff" />
        <path d="M16 24c4 0 6-3 8-6l2 15c-5-2-9-5-10-9z" fill="#aa6eff" />
      </>
    ),
  },
];

function Taskbar() {
  return (
    <div className="flex h-[60px] bg-[#1c2029] leading-none text-white">
      <button type="button" aria-label="开始" className="flex w-[73px] items-center justify-center">
        <svg viewBox="0 0 24 24" className="h-6 w-6" fill="#fff">
          <path d="M0 3.500L10 2V11.500H0ZM11 2L24 0V11.500H11ZM0 12.500H10V22L0 20.500ZM11 12.500H24V24L11 22Z" />
        </svg>
      </button>
      <label className="flex w-[515px] items-center border-2 border-[#5a5a5a] bg-[#333] pl-4 text-2xl">
        <svg viewBox="0 0 24 24" className="mr-[17px] h-6 w-6" fill="none" stroke="#fff" strokeWidth="1.800">
          <circle cx="15" cy="9" r="8" />
          <path d="M9 15L1 23" />
        </svg>
        <input
          type="text"
          aria-label="搜索"
          placeholder="在这里输入你要搜索的内容"
          className="min-w-0 flex-1 bg-transparent placeholder:text-[#dcdcdc] focus:outline-none"
        />
      </label>
      <button type="button" aria-label="Cortana" className="flex w-[72px] items-center justify-center">
        <span className="h-6 w-6 rounded-full border-[3px] border-white" />
      </button>
      <button type="button" aria-label="任务视图" className="mr-1 flex w-[72px] items-center justify-center">
        <svg viewBox="0 0 24 24" className="h-6 w-6" fill="none" stroke="#fff" strokeWidth="1.500">
          <path d="M1 0V4H16V0M1 24V20H16V24M1 7H16V17H1ZM22.500 0V6M22.500 12V24" />
          <rect x="21" y="7.500" width="3" height="3" fill="#fff" stroke="none" />
        </svg>
      </button>
      {APPS.map((app) => (
        <button key={app.name} type="button" aria-label={app.name} className="flex w-[62px] flex-col items-center justify-between pt-3">
          <svg viewBox="0 0 36 36" className="h-9 w-9">
            {app.icon}
          </svg>
          <span className={clsx('h-[3px] w-12', app.running && 'bg-[#76b9ed]')} />
        </button>
      ))}
      <button type="button" aria-label="录屏" className="relative ml-1 flex w-[54px] justify-center pt-3">
        <svg viewBox="0 0 36 36" className="h-9 w-9">
          <rect width="18" height="18" fill="#4682be" />
          <rect x="18" width="18" height="18" fill="#6eaa6e" />
          <rect y="18" width="18" height="18" fill="#dcaa78" />
          <rect x="18" y="18" width="18" height="18" fill="#b4b4b4" />
          <circle cx="18" cy="18" r="15" fill="#fff" opacity=".35" />
          <path d="M0 0h5L20 16l-4 3z" fill="#c8323c" />
          <circle cx="19" cy="18" r="5" fill="#e61e1e" />
        </svg>
        <span className="absolute inset-x-0 bottom-0 h-9 border-b-[3px] border-[#76b9ed] bg-white/20" />
        <svg viewBox="0 0 14 20" className="absolute left-7 top-[30px] h-5 w-3.5">
          <path d="M1 1V16L5 13L8 19L10 18L8 12H13Z" fill="#e6e6e6" stroke="#000" />
        </svg>
      </button>
      <span className="ml-[18px] mt-[3px] flex h-[23px] w-[22px] items-center justify-center bg-white text-black">拼</span>
      <div className="ml-auto flex items-center">
        <svg viewBox="0 0 94 30" className="h-[30px] w-[94px]" fill="none" stroke="#fff" strokeWidth="1.500">
          <path d="M2 19L10 10L18 19" />
          <path d="M38 25C38 16 45 8 55 7" stroke="#969696" />
          <path d="M42 25C43 18 48 13 55 12M46 25C47 21 50 18 55 17M50 25C51 23 53 22 55 22" />
          <circle cx="54" cy="25" r="1.500" fill="#fff" stroke="none" />
          <path d="M71 12H75L80 7V24L75 19H71ZM83 12C84 14 84 17 83 19M86 10C88 13 88 18 86 21M89 8C92 12 92 19 89 23" />
        </svg>
        <span className="ml-2.5 text-[22px]">中</span>
        <span className="ml-5 flex h-[22px] w-[23px] items-center justify-center bg-white text-black">拼</span>
        <time className="ml-4 flex w-[112px] flex-col items-center gap-[9px] text-[19px] leading-[19px]">
          <span>20:38</span>
          <span>2019/10/15</span>
        </time>
        <button type="button" aria-label="通知" className="ml-[19px] mr-[30px]">
          <svg viewBox="0 0 26 26" className="h-[26px] w-[26px]" fill="none" stroke="#fff" strokeWidth="1.600">
            <path d="M1 2H25V20H17L13 25L9 20H1Z" />
          </svg>
        </button>
      </div>
      <span className="w-[7px] border-l border-[#7a7a7a]" />
    </div>
  );
}

export default function App() {
  return (
    <div className="flex min-h-screen flex-col bg-[#fafafa] font-['Open_Sans','Noto_Sans_CJK_SC',sans-serif] text-lg leading-none">
      <TitleBar />
      <main className="flex bg-black">
        <div className="min-w-0 flex-1">
          <PeriodBar />
          <CandlePanel />
          <VolumePanel />
          <MacdPanel />
          <ChanPanel />
          <DateAxis />
          <IndicatorTabs />
        </div>
        <QuoteSidebar />
      </main>
      <div className="flex-1" />
      <StatusBar />
      <Taskbar />
    </div>
  );
}
